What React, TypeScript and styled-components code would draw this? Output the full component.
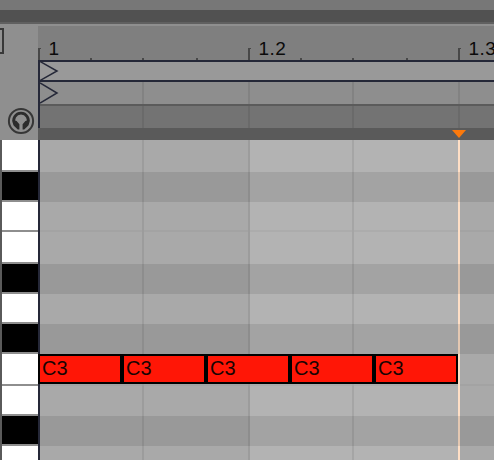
import React from 'react';
import styled, { createGlobalStyle } from 'styled-components';

const GlobalStyle = createGlobalStyle`
  html, body { margin: 0; padding: 0; overflow: hidden; background: #5a5a5a; }
  *, *::before, *::after { box-sizing: border-box; }
`;

const LINE = '#252838';

const Editor = styled.main`
  display: flex;
  flex-direction: column;
  width: 494px;
  height: 460px;
  overflow: hidden;
  font-family: 'Liberation Sans', Arial, sans-serif;
  font-size: 19px;
  color: #0b0b0b;
`;

const WindowEdge = styled.div`
  flex: none;
  height: 24px;
  background: linear-gradient(#777 0 10px, #515151 10px 22px, #606060 22px 24px);
`;

const Header = styled.header`
  display: flex;
  flex: none;
  height: 116px;
`;

const Controls = styled.div`
  display: flex;
  flex: none;
  flex-direction: column;
  justify-content: space-between;
  width: 38px;
  padding: 4px 0 5px;
  background: #8f8f8f;
`;

const FoldButton = styled.button`
  width: 4px;
  height: 26px;
  padding: 0;
  border: 2px solid #383838;
  border-left: 0;
  border-radius: 0;
  background: #929292;
`;

const PreviewButton = styled.button`
  display: block;
  width: 28px;
  height: 28px;
  margin-left: 7px;
  padding: 0;
  border: 0;
  background: none;
  svg { display: block; }
`;

const Timeline = styled.div`
  display: flex;
  flex-direction: column;
  flex: 1;
  min-width: 0;
`;

const Ruler = styled.div`
  display: flex;
  align-items: flex-end;
  height: 36px;
  border-top: 2px solid #8f8f8f;
  background: #7f7f7f;
  overflow: hidden;
`;

const Tick = styled.div<{ $width: number; $major?: boolean }>`
  position: relative;
  flex: none;
  width: ${p => p.$width}px;
  height: ${p => (p.$major ? 12 : 2)}px;
  border-left: 2px solid #484848;
  &::after {
    content: '';
    display: ${p => (p.$major ? 'block' : 'none')};
    width: 1px;
    height: 1px;
    background: #484848;
  }
`;

const TickLabel = styled.span`
  position: absolute;
  left: 8.5px;
  top: -10px;
  line-height: 22px;
  letter-spacing: 0.4px;
  white-space: nowrap;
`;

const Strips = styled.div`
  display: flex;
  flex-direction: column;
  height: 68px;
  border-left: 2px solid ${LINE};
`;

const LoopStrip = styled.div`
  height: 22px;
  border: solid ${LINE};
  border-width: 2px 0;
  background: #999;
  svg { display: block; }
`;

const Strip = styled.div<{ $color: string; $line?: boolean }>`
  position: relative;
  display: flex;
  overflow: hidden;
  height: ${p => (p.$line ? '24px' : '22px')};
  background: ${p => p.$color};
  border-bottom: ${p => (p.$line ? '2px solid #5b5b5b' : '0')};
`;

const StartMarker = styled.svg`
  position: absolute;
  left: 0;
  top: 0;
`;

const StripCell = styled.div<{ $width: number }>`
  flex: none;
  width: ${p => p.$width}px;
  border-right: 2px solid rgba(0, 0, 0, 0.08);
`;

const Scrub = styled.div`
  height: 12px;
  padding: 2px 0 0 414px;
  background: #5a5a5a;
  svg { display: block; }
`;

const Body = styled.section`
  display: flex;
  flex: 1;
  min-height: 0;
`;

const Keyboard = styled.div`
  flex: none;
  width: 38px;
  border-left: 2px solid #5a5a5a;
`;

const Key = styled.div<{ $black: boolean; $height: number }>`
  height: ${p => p.$height}px;
  background: ${p => (p.$black ? '#000' : '#fff')};
  border-bottom: 2px solid #8e8e8e;
  &:last-child { border-bottom: 0; }
`;

const Grid = styled.div`
  position: relative;
  flex: 1;
  min-width: 0;
  border-left: 2px solid ${LINE};
`;

const Lane = styled.div<{ $height: number }>`
  display: flex;
  height: ${p => p.$height}px;
  overflow: hidden;
`;

const Cell = styled.div<{ $width: number; $bright: boolean; $dark: boolean; $split: boolean }>`
  flex: none;
  width: ${p => p.$width}px;
  background: ${p => (p.$dark ? (p.$bright ? '#a3a3a3' : '#999') : p.$bright ? '#b3b3b3' : '#a9a9a9')};
  border-right: 2px solid rgba(0, 0, 0, 0.075);
  box-shadow: ${p => (p.$split ? 'inset 0 -2px rgba(0, 0, 0, 0.035)' : 'none')};
`;

const Clip = styled.div`
  position: absolute;
  left: -2px;
  top: 214px;
  display: flex;
`;

const Note = styled.div`
  width: 84px;
  height: 30px;
  padding-left: 2px;
  border: 2px solid #000;
  background: #ff1606;
  color: #180403;
  font-size: 20px;
  line-height: 25px;
`;

const Playhead = styled.div`
  position: absolute;
  top: 0;
  bottom: 0;
  left: 418px;
  width: 2px;
`;

const PlayheadPart = styled.div<{ $height: number; $dark: boolean }>`
  height: ${p => p.$height}px;
  background: ${p => (p.$dark ? '#e4c8b2' : '#ffdfc6')};
`;

const ticks = [
  { width: 52, label: '1' }, { width: 52 }, { width: 54 }, { width: 52 },
  { width: 52, label: '1.2' }, { width: 52 }, { width: 54 }, { width: 52 },
  { width: 52, label: '1.3' },
];
const cells = [104, 106, 104, 106, 104];
const lanes = [
  { height: 32, black: false }, { height: 30, black: true },
  { height: 30, black: false, split: true }, { height: 32, black: false },
  { height: 30, black: true }, { height: 30, black: false },
  { height: 30, black: true }, { height: 32, black: false, split: true },
  { height: 30, black: false }, { height: 30, black: true },
  { height: 14, black: false },
];
const notes = ['C3', 'C3', 'C3', 'C3', 'C3'];

export default function App() {
  return (
    <Editor>
      <GlobalStyle />
      <WindowEdge />
      <Header>
        <Controls>
          <FoldButton aria-label="Fold" />
          <PreviewButton aria-label="Preview notes">
            <svg width="28" height="28" viewBox="0 0 28 28" fill="none">
              <circle cx="14" cy="14" r="12.1" stroke="#363636" strokeWidth="2" />
              <path d="M7.6 17 A7.3 7.3 0 1 1 20.4 17" stroke="#2c2c2c" strokeWidth="2.8" />
              <path d="M5.6 13 L9.6 14 L12.4 17.2 V22.5 H10.8 L6.6 18.4 Z M22.4 13 L18.4 14 L15.6 17.2 V22.5 H17.2 L21.4 18.4 Z" fill="#2c2c2c" />
            </svg>
          </PreviewButton>
        </Controls>
        <Timeline>
          <Ruler>
            {ticks.map((t, i) => (
              <Tick key={i} $width={t.width} $major={!!t.label}>
                {t.label && <TickLabel>{t.label}</TickLabel>}
              </Tick>
            ))}
          </Ruler>
          <Strips>
            <LoopStrip>
              <svg width="20" height="18" viewBox="0 0 20 18">
                <path d="M0 -0.5 L17 9 L0 18.5" fill="none" stroke={LINE} strokeWidth="1.5" />
              </svg>
            </LoopStrip>
            <Strip $color="#8e8e8e" $line>
              {cells.map((w, i) => <StripCell key={i} $width={w} />)}
              <StartMarker width="20" height="22" viewBox="0 0 20 22">
                <path d="M0 1 L17 11 L0 21" fill="none" stroke={LINE} strokeWidth="1.5" />
              </StartMarker>
            </Strip>
            <Strip $color="#737373">
              {cells.map((w, i) => <StripCell key={i} $width={w} />)}
            </Strip>
          </Strips>
          <Scrub>
            <svg width="14" height="8" viewBox="0 0 14 8">
              <path d="M0 0 H14 L7 8 Z" fill="#fb790c" />
            </svg>
          </Scrub>
        </Timeline>
      </Header>
      <Body>
        <Keyboard>
          {lanes.map((l, i) => <Key key={i} $height={l.height} $black={l.black} />)}
        </Keyboard>
        <Grid>
          {lanes.map((l, i) => (
            <Lane key={i} $height={l.height}>
              {cells.map((w, c) => (
                <Cell key={c} $width={w} $dark={l.black} $bright={c === 2 || c === 3} $split={!!l.split} />
              ))}
            </Lane>
          ))}
          <Clip>{notes.map((n, i) => <Note key={i}>{n}</Note>)}</Clip>
          <Playhead>
            {lanes.map((l, i) => <PlayheadPart key={i} $height={l.height} $dark={l.black} />)}
          </Playhead>
        </Grid>
      </Body>
    </Editor>
  );
}
